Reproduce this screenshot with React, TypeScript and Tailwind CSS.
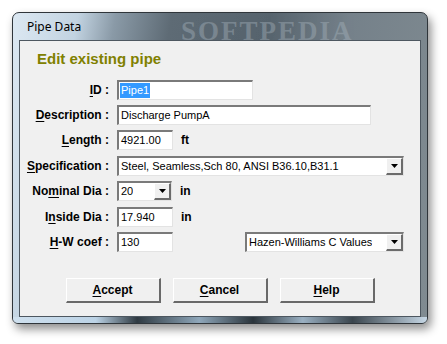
import { ReactNode } from 'react';

const labelFont = { fontFamily: '"Liberation Sans", Arial, sans-serif' };

function Label({ children }: { children: ReactNode }) {
    return (
        <div className="w-[89px] shrink-0 text-right text-[12px] font-bold text-black leading-[20px] whitespace-nowrap" style={labelFont}>
            {children}
        </div>
    );
}

function U({ children }: { children: ReactNode }) {
    return <span className="underline underline-offset-[2px] decoration-[1px]">{children}</span>;
}

function TextBox({ value, width, selected }: { value: string; width: string; selected?: boolean }) {
    return (
        <div className={`${width} h-[20px] bg-white border-t-2 border-l-2 border-t-[#7a7a7a] border-l-[#7a7a7a] border-b border-r border-b-[#e3e3e3] border-r-[#e3e3e3] flex items-center pl-[1px] text-[11px] text-black`} style={labelFont}>
            {selected ? <span className="bg-[#3399ff] text-white px-[1px] leading-[15px]">{value}</span> : <span className="px-[1px]">{value}</span>}
        </div>
    );
}

function DropArrow() {
    return (
        <div className="w-[17px] h-[17px] bg-[#f0f0f0] border-t border-l border-t-[#ffffff] border-l-[#ffffff] border-b-2 border-r-2 border-b-[#6b6b6b] border-r-[#6b6b6b] flex items-center justify-center">
            <svg width="7" height="4" viewBox="0 0 7 4">
                <polygon points="0,0 7,0 3.5,4" fill="#000" />
            </svg>
        </div>
    );
}

function Select({ value, width }: { value: string; width: string }) {
    return (
        <div className={`${width} h-[20px] bg-white border-t-2 border-l-2 border-t-[#7a7a7a] border-l-[#7a7a7a] border-b border-r border-b-[#e3e3e3] border-r-[#e3e3e3] flex items-center justify-between text-[11px] text-black`} style={labelFont}>
            <span className="pl-[2px] whitespace-nowrap overflow-hidden">{value}</span>
            <DropArrow />
        </div>
    );
}

function Unit({ children }: { children: ReactNode }) {
    return <span className="text-[12px] font-bold text-black" style={labelFont}>{children}</span>;
}

function Button({ children }: { children: ReactNode }) {
    return (
        <button className="w-[95px] h-[25px] bg-[#f0f0f0] border-t border-l border-t-white border-l-white border-b-2 border-r-2 border-b-[#696969] border-r-[#696969] text-[12px] font-bold text-black" style={labelFont}>
            {children}
        </button>
    );
}

export default function App() {
    return (
        <div className="w-[447px] h-[344px] bg-white p-[12px] overflow-hidden">
            <div className="w-[416px] h-[312px] rounded-t-[7px] rounded-b-[6px] border border-[#2f353a] shadow-[3px_5px_10px_rgba(0,0,0,0.45)] bg-[linear-gradient(100deg,#dce8f2_0%,#c2d3e1_14%,#8a9aa7_22%,#5e6b75_34%,#56636d_55%,#75818a_72%,#808b91_100%)] flex flex-col px-[6px] pb-[6px] relative overflow-hidden">
                <div className="h-[27px] flex items-center pl-[8px] text-[12px] text-black relative" style={{ fontFamily: '"Noto Sans", "Open Sans", sans-serif' }}>
                    Pipe Data
                    <span className="absolute left-[162px] top-[-2px] text-[27px] font-bold tracking-[2px] text-[#a8b5be] opacity-40" style={{ fontFamily: '"Liberation Serif", serif' }}>SOFTPEDIA</span>
                </div>
                <div className="flex-1 border border-[#4d5760] bg-[#f0f0f0] flex flex-col relative z-10">
                    <div className="pl-[17px] pt-[9px] text-[15px] font-bold text-[#808000] leading-[18px]" style={labelFont}>
                        Edit existing pipe
                    </div>
                    <div className="flex flex-col mt-[12px]">
                        <div className="flex items-center gap-[8px]">
                            <Label><U>I</U>D :</Label>
                            <TextBox value="Pipe1" width="w-[136px]" selected />
                        </div>
                        <div className="flex items-center gap-[8px] mt-[5px]">
                            <Label><U>D</U>escription :</Label>
                            <TextBox value="Discharge PumpA" width="w-[254px]" />
                        </div>
                        <div className="flex items-center gap-[8px] mt-[5px]">
                            <Label><U>L</U>ength :</Label>
                            <TextBox value="4921.00" width="w-[56px]" />
                            <Unit>ft</Unit>
                        </div>
                        <div className="flex items-center gap-[8px] mt-[6px]">
                            <Label><U>S</U>pecification :</Label>
                            <Select value="Steel, Seamless,Sch 80, ANSI B36.10,B31.1" width="w-[287px]" />
                        </div>
                        <div className="flex items-center gap-[8px] mt-[5px]">
                            <Label>No<U>m</U>inal Dia :</Label>
                            <Select value="20" width="w-[55px]" />
                            <Unit>in</Unit>
                        </div>
                        <div className="flex items-center gap-[8px] mt-[6px]">
                            <Label>I<U>n</U>side Dia :</Label>
                            <TextBox value="17.940" width="w-[56px]" />
                            <Unit>in</Unit>
                        </div>
                        <div className="flex items-center gap-[8px] mt-[5px]">
                            <Label><U>H</U>-W coef :</Label>
                            <TextBox value="130" width="w-[56px]" />
                            <div className="ml-[64px]">
                                <Select value="Hazen-Williams C Values" width="w-[159px]" />
                            </div>
                        </div>
                    </div>
                    <div className="flex justify-center gap-[12px] mt-[26px]">
                        <Button><U>A</U>ccept</Button>
                        <Button><U>C</U>ancel</Button>
                        <Button><U>H</U>elp</Button>
                    </div>
                </div>
                <div className="absolute left-0 right-0 bottom-0 h-[6px] bg-[linear-gradient(90deg,#cfe0ee_0%,#bcd3e6_20%,#2f3a42_30%,#8fa7ba_45%,#2a343b_58%,#9ab0c2_70%,#3a454d_82%,#c7d8e6_100%)]" />
            </div>
        </div>
    );
}
